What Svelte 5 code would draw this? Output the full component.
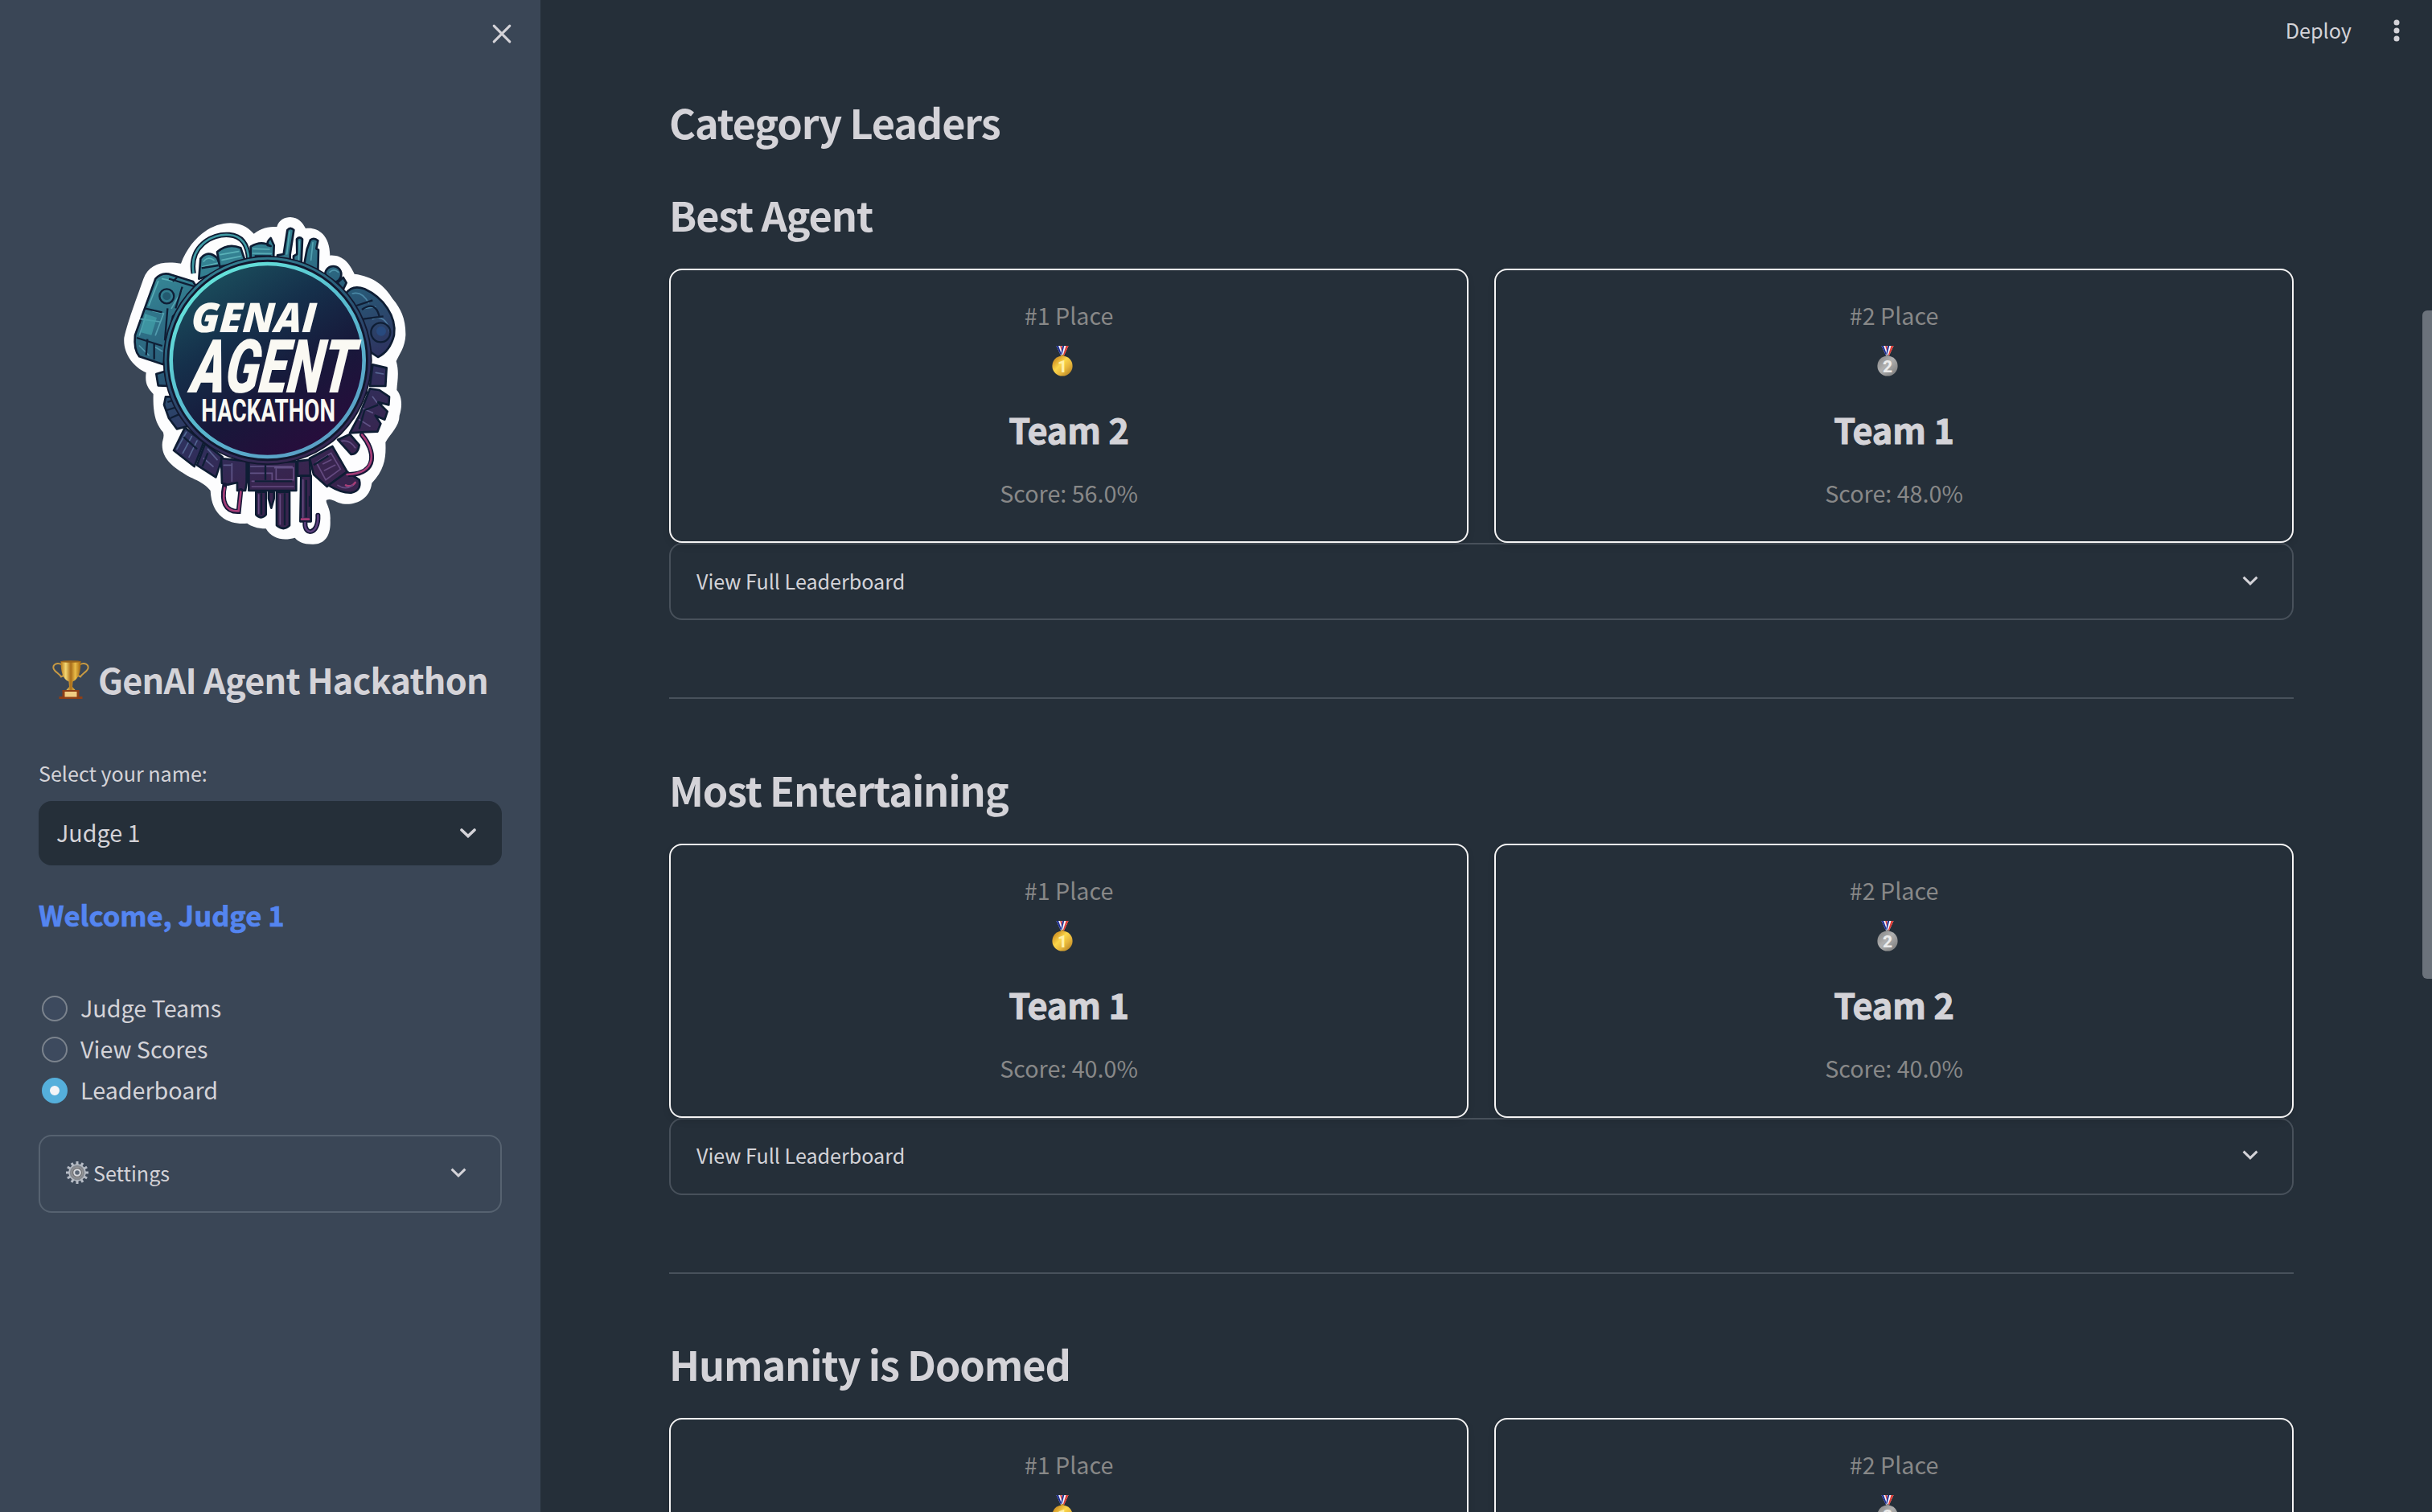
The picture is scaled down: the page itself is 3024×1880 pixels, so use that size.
<script>
  const sections = [
    { title: 'Best Agent', places: [['Team 2', '56.0%'], ['Team 1', '48.0%']] },
    { title: 'Most Entertaining', places: [['Team 1', '40.0%'], ['Team 2', '40.0%']] },
    { title: 'Humanity is Doomed', places: [['Team 1', '40.0%'], ['Team 2', '40.0%']] }
  ];
  const pages = ['Judge Teams', 'View Scores', 'Leaderboard'];
  let current = $state('Leaderboard');
</script>

{#snippet chevron(w)}
  <svg class="chev" viewBox="0 0 20 12" width="20" height="12"><path d="M1.6 1.6 L10 9.8 L18.4 1.6" fill="none" stroke="currentColor" stroke-width={w} /></svg>
{/snippet}

{#snippet medal(n)}
  <svg class="medal" viewBox="0 0 28 38" width="28" height="38">
    <defs>
      <linearGradient id="m1" x1="0" y1="0" x2="1" y2="1"><stop offset="0" stop-color="#c98f22" /><stop offset=".2" stop-color="#d99f2a" /><stop offset=".42" stop-color="#fbd64a" /><stop offset=".65" stop-color="#e7b63c" /><stop offset="1" stop-color="#a8741c" /></linearGradient>
      <linearGradient id="m2" x1="0" y1="0" x2="1" y2="1"><stop offset="0" stop-color="#7f7f7f" /><stop offset=".45" stop-color="#b0b0b0" /><stop offset="1" stop-color="#757575" /></linearGradient>
    </defs>
    <path d="M6.500 0h7.500l2 12h-4z" fill="#f4f3fa" />
    <path d="M6.500 0h2.600l4.400 12h-1.500z" fill="#1d2f96" />
    <path d="M11.200 0h2l1.500 8-.6 2z" fill="#d93a36" />
    <path d="M21.500 0h-7l-2.500 12h4z" fill="#f4f3fa" />
    <path d="M21.500 0h-3l-3.800 12h1.500z" fill="#e03c35" />
    <path d="M16.300 0h-2.200l-1.800 10 .8 2z" fill="#1d2f96" />
    <circle cx="14" cy="12.600" r="1.800" fill={n === 1 ? '#b98a35' : '#858585'} />
    <circle cx="14" cy="25" r="12.600" fill={n === 1 ? 'url(#m1)' : 'url(#m2)'} />
    <text x="14" y="32.600" class="digit" fill={n === 1 ? '#fff0a5' : '#ececec'}>{n}</text>
  </svg>
{/snippet}

<div class="app">
  <aside>
    <div class="close"><svg viewBox="0 0 22 22" width="24" height="24"><path d="M2 2 L20 20 M20 2 L2 20" stroke="currentColor" stroke-width="2.800" stroke-linecap="round" /></svg></div>

    <div class="logo">
      <svg viewBox="0 0 1200 1320" width="400" height="440">
        <defs>
          <linearGradient id="bodyu" gradientUnits="userSpaceOnUse" x1="400" y1="150" x2="760" y2="1000"><stop offset="0" stop-color="#378b99" /><stop offset=".4" stop-color="#285b78" /><stop offset=".7" stop-color="#2e315e" /><stop offset="1" stop-color="#38244e" /></linearGradient>
          <linearGradient id="hi" gradientUnits="userSpaceOnUse" x1="400" y1="150" x2="760" y2="1000"><stop offset="0" stop-color="#5cb9bb" /><stop offset=".5" stop-color="#467fa2" /><stop offset="1" stop-color="#644a80" /></linearGradient>
          <linearGradient id="ring" x1="0" y1="0" x2=".7" y2="1"><stop offset="0" stop-color="#6af0de" /><stop offset=".5" stop-color="#58bfd0" /><stop offset="1" stop-color="#5a9fc6" /></linearGradient>
          <linearGradient id="disc" x1=".15" y1="0" x2=".75" y2="1"><stop offset="0" stop-color="#1c5460" /><stop offset=".35" stop-color="#15304b" /><stop offset=".65" stop-color="#17183a" /><stop offset="1" stop-color="#2a0b3c" /></linearGradient>
        </defs>
        <path fill="#fdfdfe" d="M285 233C320 140 395 82 470 82C520 84 540 105 557 122C585 100 610 96 643 96C650 70 672 60 693 60C722 62 738 78 750 102C790 96 840 120 841 203C890 200 915 235 932 272C1000 280 1045 315 1075 365C1105 400 1124 440 1123 500C1121 545 1100 570 1088 597C1100 640 1092 670 1090 705C1112 730 1110 770 1100 800C1100 840 1068 865 1048 900C1050 950 1048 1000 997 1052C990 1110 940 1132 900 1130C870 1132 850 1105 828 1115C822 1125 845 1145 842 1190C845 1250 820 1282 775 1280C740 1280 722 1270 710 1256C670 1268 625 1262 602 1222C570 1222 545 1212 532 1202C480 1208 400 1190 395 1080C370 1050 340 1040 310 1025C260 995 215 965 215 910C215 890 225 880 218 862C190 830 180 790 182 720C160 695 150 680 155 640C110 620 68 570 73 510C90 440 110 390 145 290C165 235 215 222 285 233Z" />
        <g fill="url(#bodyu)" stroke="#0e1d34" stroke-width="8" stroke-linejoin="round">
          <path d="M332 270C315 170 400 120 465 126C515 130 535 165 538 220" fill="none" stroke-width="19" />
          <path d="M332 270C315 170 400 120 465 126C515 130 535 165 538 220" fill="none" stroke="#409aa4" stroke-width="8" />
          <path d="M190 290Q215 262 250 275L330 300L350 330L255 430L220 610L130 580Q108 555 114 500L150 400Z" />
          <path d="M352 290L358 215Q385 180 420 212L440 260Z" /><path d="M430 245L420 190Q460 155 508 175L525 225Z" />
          <path d="M545 220V170Q585 145 620 168L608 165Q605 150 620 138L632 165L630 222Z" />
          <path d="M645 222V202L668 198L682 108Q693 95 706 108L692 200V225Z" />
          <path d="M705 225V205L718 198L717 142Q727 130 738 142L734 232Z" /><path d="M745 235L755 180L768 145Q782 135 796 148L790 178L798 182L796 260Z" />
          <circle cx="853" cy="273" r="30" /><path d="M868 305L890 285L902 305L890 330Z" />
          <path d="M900 345Q925 310 970 328C1040 360 1090 430 1080 500Q1065 560 1020 582L995 565Z" />
          <path d="M193 645L225 635L235 690L200 688Z" /><path d="M228 730L260 730L310 840L270 850L240 810L222 760Z" />
          <path d="M1000 610L1052 622L1048 690L990 690Z" /><path d="M990 700L1025 705L1062 730L1060 760L1020 750L1055 785L1045 815L1010 800L1030 830L1018 860L960 862L915 865L950 800Z" />
          <path d="M300 845L370 900L335 990L258 930Z" /><path d="M375 905L440 955L415 1030L345 985Z" />
          <path d="M435 960L530 970V1050L525 1080H495V1050L460 1058L438 1052Z" />
          <path d="M538 975L715 972V1080H538Z" /><path d="M720 970L765 965L768 1025L720 1025Z" />
          <path d="M565 1085H602V1170Q585 1190 565 1170Z" /><path d="M612 1085H632V1110L622 1145L612 1110Z" />
          <path d="M642 1085H690V1210Q668 1232 642 1210Z" /><path d="M733 1025H770V1195H730Z" />
          <path d="M765 960L850 915L905 1010L830 1065L780 1020Z" /><path d="M835 1060L905 1010L950 1040Q960 1080 920 1088Q885 1090 835 1060Z" />
          <path d="M870 890L915 870L950 910Q945 945 920 945Z" />
        </g>
        <g fill="none" stroke="#151838" stroke-width="18" stroke-linecap="round">
          <path d="M448 1060C435 1120 450 1160 500 1158L508 1080" /><path d="M960 872C1010 930 1020 1015 915 1020" /><path d="M748 1200C745 1250 800 1245 796 1172" />
        </g>
        <g fill="none" stroke="#a73d78" stroke-width="8" stroke-linecap="round">
          <path d="M448 1070C438 1120 450 1160 500 1156L508 1085" /><path d="M960 872C1010 930 1020 1015 905 1020" /><path d="M748 1200C745 1250 800 1245 796 1172" stroke="#5c407e" />
          <path d="M900 1060Q920 1070 935 1050M735 1187H762" />
        </g>
        <g fill="none" stroke="url(#hi)" stroke-width="5" stroke-linecap="round">
          <path d="M200 300L165 390M215 290L290 305M155 425L130 500M135 440L205 450M180 410L220 420L190 500M130 540L165 575M190 545L215 560M250 400L290 330M370 225Q385 205 408 220M366 245L420 232M432 200L500 188M438 220L508 206M555 178L615 180M553 195L622 196M690 115L680 198M727 150L724 220M777 155L770 220M840 265Q855 250 872 265M925 345Q960 335 985 380M970 400L1010 395M1000 440Q1050 420 1065 490M1012 640L1040 645M1000 730L1015 750M965 775L1000 790M950 815L990 840" />
          <path d="M305 862L270 925M325 878L292 940M345 894L315 955M385 925L420 965M370 960L405 990M445 985L470 985M475 980V1045M545 990H700M545 1015H625V1045H550M635 995H705V1040H640V1000M550 1065H705M575 1095V1165M655 1095V1205M740 1040V1180M790 975L845 940L880 1000L825 1040Z" />
          <path d="M815 980L845 965M820 1005L860 985M870 1060Q900 1080 925 1060M885 895Q915 890 935 920" />
        </g>
        <g fill="none" stroke="#0f1e35" stroke-width="7"><circle cx="232" cy="355" r="27" /><circle cx="1030" cy="490" r="36" /><path d="M150 400L215 415M120 510L215 540M160 515L155 575M185 530V590M940 390L1000 370M965 440L1040 430M960 405Q1010 370 1025 430M270 285L255 300M240 290L340 320M290 320L265 400M235 400L225 520" /><path d="M235 750L265 740M232 780L280 765M245 810L290 790M950 850L970 780L1020 760M980 710L950 760M765 1100V1140M295 880L345 925M385 940L365 990M560 1045H700M600 985V1040M585 1090V1170M672 1090V1210M752 1040V1180M780 985L835 950M362 250L425 240M560 205H622" /></g>
        <circle cx="1032" cy="485" r="18" fill="#284a7e" /><circle cx="232" cy="355" r="15" fill="#235a70" />
        <path d="M150 420L195 435L175 500L135 490Z" fill="#43a0aa" opacity=".75" />
        <circle cx="608" cy="594" r="390" fill="#11182f" /><circle cx="608" cy="594" r="380" fill="none" stroke="url(#bodyu)" stroke-width="9" />
        <circle cx="608" cy="594" r="360" fill="url(#disc)" stroke="url(#ring)" stroke-width="14" />
        <g fill="#faf9f3">
          <text class="genai" transform="translate(322 488) skewX(-3)" textLength="466" lengthAdjust="spacingAndGlyphs">GENAI</text>
          <text class="agent" transform="translate(318 713) skewX(-7)" textLength="606" lengthAdjust="spacingAndGlyphs">AGENT</text>
          <text class="hack" transform="translate(361 823)" textLength="500" lengthAdjust="spacingAndGlyphs">HACKATHON</text>
        </g>
      </svg>
    </div>

    <h2>
      <svg viewBox="0 0 48 50" width="48" height="50">
        <defs><linearGradient id="gold" x1="0" x2="1" y1="0" y2="0"><stop offset="0" stop-color="#b57618" /><stop offset=".25" stop-color="#f4d873" /><stop offset=".5" stop-color="#a96c18" /><stop offset=".72" stop-color="#e8bb48" /><stop offset="1" stop-color="#a4660f" /></linearGradient></defs>
        <path d="M13 6.500C7 3 1.500 6 2.500 11C3.500 15 9 17 12 21.500L15 20M35 6.500C41 3 46.500 6 45.500 11C44.500 15 39 17 36 21.500L33 20" fill="none" stroke="#c89a43" stroke-width="2" />
        <path d="M11.500 2H36.500C36.500 15 34 24.500 26.500 27.500L26 34L30 38.500H18L22 34L21.500 27.500C14 24.500 11.500 15 11.500 2Z" fill="url(#gold)" />
        <ellipse cx="24" cy="2.500" rx="12.500" ry="1.300" fill="#9b641a" />
        <path d="M13.500 38H34.500V46H38.500V49H9.500V46H13.500Z" fill="#8d3f17" /><path d="M16.500 40H31.500V46.500H16.500Z" fill="#f0cd83" />
      </svg>
      <span>GenAI Agent Hackathon</span>
    </h2>

    <div class="label">Select your name:</div>
    <div class="select"><span>Judge 1</span><svg class="chev" viewBox="0 0 20 12" width="20" height="12"><path d="M2 2 L10 9.600 L18 2" fill="none" stroke="currentColor" stroke-width="3.600" stroke-linecap="round" /></svg></div>
    <h4>Welcome, Judge 1</h4>

    <div class="radios">
      {#each pages as page}
        <button class="radio" onclick={() => (current = page)}><i class:on={current === page}></i><span>{page}</span></button>
      {/each}
    </div>

    <div class="expander settings">
      <svg viewBox="-14 -14 28 28" width="28" height="28">
        {#each Array(12) as _, k}<rect x="-1.500" y="-14" width="3" height="6" fill="#b6bcc6" transform={`rotate(${k * 30})`} />{/each}
        <circle r="10" fill="#85898f" stroke="#b4b9c1" stroke-width="1.500" /><circle r="6.500" fill="#6d6e73" stroke="#999" /><circle r="3.800" fill="#5b6675" stroke="#d7d9dd" stroke-width="2" />
      </svg>
      <span>Settings</span>{@render chevron(3)}
    </div>
  </aside>

  <main>
    <header>
      <span>Deploy</span>
      <svg viewBox="0 0 8 28" width="8" height="28" fill="currentColor"><circle cx="4" cy="4" r="3.500" /><circle cx="4" cy="14" r="3.500" /><circle cx="4" cy="24" r="3.500" /></svg>
    </header>
    <h1>Category Leaders</h1>
    {#each sections as s}
      <section>
        <h1>{s.title}</h1>
        <div class="cards">
          {#each s.places as [team, score], i}
            <article>
              <p class="place">#{i + 1} Place</p>
              {@render medal(i + 1)}
              <h3>{team}</h3>
              <p class="score">Score: {score}</p>
            </article>
          {/each}
        </div>
        <div class="expander"><span>View Full Leaderboard</span>{@render chevron(3)}</div>
        <hr />
      </section>
    {/each}
    <div class="thumb"></div>
  </main>
</div>

<style>
  :global(body) { background: #252f39; overflow: hidden; }
  .app { display: flex; width: 3024px; height: 1880px; overflow: hidden; color: #d4d3d8; background: #252f39; font-family: 'Noto Sans CJK SC', 'Noto Sans', sans-serif; font-size: 28.7px; }
  h1, h2, h3, h4, p { margin: 0; }
  svg { display: block; flex: none; }
  aside { box-sizing: border-box; width: 672px; height: 1880px; flex: none; padding: 30px 48px 0; background: #3a4656; display: flex; flex-direction: column; }
  .close { display: flex; justify-content: flex-end; margin-right: -12px; height: 220px; }
  .logo { margin-left: 82px; height: 440px; }
  h2 { display: flex; align-items: center; height: 60px; margin: 125px 0 0 16px; font-size: 43.2px; font-weight: 600; letter-spacing: -0.75px; white-space: nowrap; }
  h2 svg { margin-right: 10px; }
  h2 span { padding-bottom: 3px; }
  .label { font-size: 25.1px; line-height: 40px; margin-top: 66px; }
  .select { display: flex; align-items: center; justify-content: space-between; height: 80px; box-sizing: border-box; padding: 0 32px 0 22px; margin-top: 15px; border-radius: 16px; background: #252f39; }
  .select span, .radio span, header span { padding-bottom: 3px; }
  h4 { font-size: 34.5px; font-weight: 700; line-height: 48px; color: #5485f0; margin-top: 37px; -webkit-text-stroke: 0.7px #5485f0; }
  .radios { margin: 67px 0 0 4px; display: flex; flex-direction: column; }
  .radio { all: unset; display: flex; align-items: center; gap: 16px; height: 51px; }
  .radio i { box-sizing: border-box; width: 32px; height: 32px; border-radius: 50%; border: 2px solid #7b838d; background: #3d4a5e; flex: none; }
  .radio i.on { border: 10px solid #55afdb; background: #f3f4f7; }
  .expander { box-sizing: border-box; display: flex; align-items: center; height: 96px; border: 2px solid #48515b; border-radius: 16px; padding: 0 42px 3px 32px; font-size: 25.1px; }
  .expander span { flex: 1; }
  .settings { height: 97px; border-color: #566270; margin-top: 30px; }
  .settings svg:first-child { margin-right: 6px; }
  main { flex: 1; box-sizing: border-box; padding: 0 172px 0 160px; position: relative; }
  header { display: flex; align-items: center; justify-content: flex-end; height: 76px; font-size: 25.2px; margin-right: -132px; }
  header span { margin-right: 52px; }
  h1 { font-size: 50.4px; font-weight: 600; line-height: 68px; height: 68px; letter-spacing: -1.12px; }
  main > h1 { margin-top: 42px; }
  section { height: 714.500px; padding-top: 47px; box-sizing: border-box; }
  .cards { display: flex; gap: 32px; margin-top: 33px; }
  article { box-sizing: border-box; flex: 1; height: 341px; border: 2px solid #f5f4f4; border-radius: 16px; display: flex; flex-direction: column; align-items: center; box-shadow: 0 4px 8px rgba(0, 0, 0, 0.1); }
  .place, .score { color: #888; line-height: 48px; }
  .place { margin-top: 32px; }
  .medal { margin: 14px 16px 0 0; }
  .digit { font: 800 21px Roboto, sans-serif; text-anchor: middle; }
  h3 { font-size: 43.2px; font-weight: 700; line-height: 60px; margin-top: 35px; letter-spacing: -0.1px; -webkit-text-stroke: 1px #d4d3d8; }
  .score { margin-top: 26px; }
  hr { border: 0; height: 2px; background: #48515b; margin: 96px 0 0; }
  .thumb { position: absolute; right: 0; top: 386px; width: 12px; height: 831px; border-radius: 6px 0 0 6px; background: #6b727b; }
  .genai { font: italic 800 152px 'Open Sans', sans-serif; }
  .agent { font: italic 900 278px Roboto, sans-serif; }
  .hack { font: 700 119px Roboto, sans-serif; }
</style>
